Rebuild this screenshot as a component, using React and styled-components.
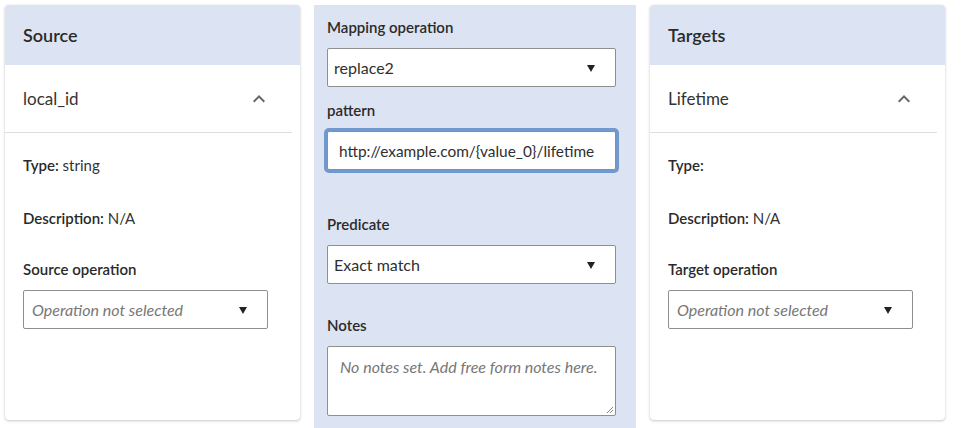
import React from "react";
import styled, { createGlobalStyle } from "styled-components";

const Global = createGlobalStyle`
  html, body { margin: 0; padding: 0; background: #ffffff; }
  body { font-family: Lato, "Open Sans", "Liberation Sans", sans-serif; color: #2f2f2f; }
  * { box-sizing: border-box; }
`;

const Page = styled.div`
  display: flex;
  align-items: flex-start;
  gap: 14px;
  padding: 5px 0 0 5px;
  width: 964px;
  height: 428px;
  overflow: hidden;
`;

const Card = styled.section`
  width: 295px;
  height: 415px;
  background: #fff;
  border-radius: 4px;
  box-shadow: 0 1px 3px rgba(0, 0, 0, 0.22), 0 0 1px rgba(0, 0, 0, 0.12);
  overflow: hidden;
  display: flex;
  flex-direction: column;
`;

const CardHeader = styled.header`
  height: 60px;
  flex: none;
  background: #dce3f2;
  display: flex;
  align-items: center;
  padding: 0 18px;
  font-size: 18px;
  font-weight: 600;
  color: #2a2a2a;
`;

const AccordionRow = styled.div`
  height: 68px;
  margin-right: 8px;
  border-bottom: 1px solid #dedede;
  display: flex;
  align-items: center;
  justify-content: space-between;
  padding: 0 21px 0 18px;
  font-size: 17px;
  color: #333;
`;

const Details = styled.div`
  padding: 22px 18px 0 18px;
  display: flex;
  flex-direction: column;
`;

const InfoLine = styled.div`
  font-size: 15px;
  line-height: 20px;
  color: #333;
  margin-bottom: ${(p) => p.$gap || 0}px;
  b { font-weight: 600; color: #2a2a2a; }
`;

const FieldLabel = styled.div`
  font-size: 15px;
  line-height: 20px;
  font-weight: 600;
  color: #2a2a2a;
  margin-top: ${(p) => p.$top || 0}px;
  margin-bottom: 11px;
`;

const SelectBox = styled.div`
  height: 39px;
  width: ${(p) => p.$width || 289}px;
  background: #fff;
  border: 1px solid #8f8f8f;
  border-radius: 2px;
  display: flex;
  align-items: center;
  justify-content: space-between;
  padding: 0 20px 0 ${(p) => (p.$placeholder ? 8 : 6)}px;
  font-size: 16px;
  font-style: ${(p) => (p.$placeholder ? "italic" : "normal")};
  color: ${(p) => (p.$placeholder ? "#777" : "#2f2f2f")};
`;

const Caret = styled.span`
  width: 0;
  height: 0;
  border-left: 4.5px solid transparent;
  border-right: 4.5px solid transparent;
  border-top: 7px solid #222;
  margin-top: 1px;
`;

const Middle = styled.section`
  width: 322px;
  height: 423px;
  background: #dce3f2;
  padding: 12px 20px 0 13px;
  display: flex;
  flex-direction: column;
`;

const TextInput = styled.div`
  height: 39px;
  background: #fff;
  border: 1px solid #8f8f8f;
  border-radius: 2px;
  box-shadow: 0 0 0 3px #7299cd;
  display: flex;
  align-items: center;
  padding-left: 11px;
  font-size: 15.4px;
  color: #2f2f2f;
  white-space: nowrap;
  overflow: hidden;
`;

const NotesArea = styled.div`
  position: relative;
  height: 70px;
  background: #fff;
  border: 1px solid #8f8f8f;
  border-radius: 2px;
  padding: 10px 12px;
  font-size: 16px;
  font-style: italic;
  color: #777;
`;

const Grip = styled.svg`
  position: absolute;
  right: 1px;
  bottom: 1px;
`;

const Chevron = () => (
  <svg width="24" height="24" viewBox="0 0 24 24" fill="#666">
    <path d="M12 8l-6 6 1.41 1.41L12 10.83l4.59 4.58L18 14z" />
  </svg>
);

function EntityCard({ title, name, type, opLabel }) {
  return (
    <Card>
      <CardHeader>{title}</CardHeader>
      <AccordionRow>
        <span>{name}</span>
        <Chevron />
      </AccordionRow>
      <Details>
        <InfoLine $gap={33}>
          <b>Type:</b> {type}
        </InfoLine>
        <InfoLine $gap={31}>
          <b>Description:</b> N/A
        </InfoLine>
        <FieldLabel>{opLabel}</FieldLabel>
        <SelectBox $width={245} $placeholder>
          <span>Operation not selected</span>
          <Caret />
        </SelectBox>
      </Details>
    </Card>
  );
}

export default function App() {
  return (
    <>
      <Global />
      <Page>
        <EntityCard title="Source" name="local_id" type="string" opLabel="Source operation" />
        <Middle>
          <FieldLabel>Mapping operation</FieldLabel>
          <SelectBox>
            <span>replace2</span>
            <Caret />
          </SelectBox>
          <FieldLabel $top={13}>pattern</FieldLabel>
          <TextInput>http://example.com/{"{value_0}"}/lifetime</TextInput>
          <FieldLabel $top={44}>Predicate</FieldLabel>
          <SelectBox>
            <span>Exact match</span>
            <Caret />
          </SelectBox>
          <FieldLabel $top={31}>Notes</FieldLabel>
          <NotesArea>
            No notes set. Add free form notes here.
            <Grip width="9" height="9" viewBox="0 0 9 9">
              <path d="M8 2L2 8M8 5L5 8" stroke="#888" strokeWidth="1" />
            </Grip>
          </NotesArea>
        </Middle>
        <EntityCard title="Targets" name="Lifetime" type="" opLabel="Target operation" />
      </Page>
    </>
  );
}
